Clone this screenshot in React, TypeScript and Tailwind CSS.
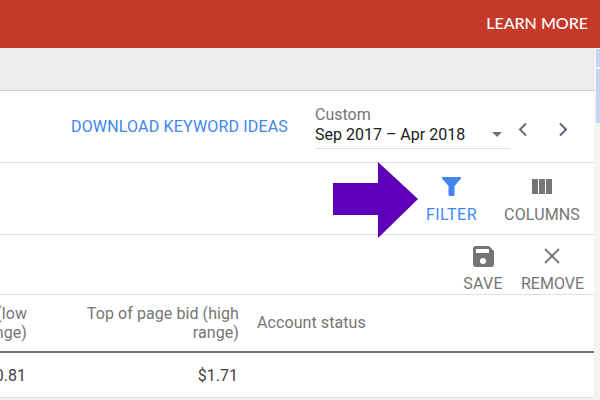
const roboto = { fontFamily: "Roboto, sans-serif" };

function ToolButton({
  icon,
  label,
  labelClass,
  className,
}: {
  icon: React.ReactNode;
  label: string;
  labelClass: string;
  className?: string;
}) {
  return (
    <div className={`flex flex-col items-center ${className ?? ""}`}>
      <div className="flex h-[24px] w-[24px] items-center justify-center">{icon}</div>
      <span className={`mt-[7px] text-[16px] leading-[18px] ${labelClass}`}>{label}</span>
    </div>
  );
}

export default function App() {
  return (
    <div className="flex h-[400px] w-[600px] flex-col overflow-hidden bg-[#f1f1f1]" style={roboto}>
      <header className="flex h-[48px] shrink-0 items-center justify-end bg-[#c53929] pb-[2px] pr-[12px]">
        <span className="text-[16px] font-medium text-white" style={{ fontFamily: "Lato, sans-serif" }}>
          LEARN MORE
        </span>
      </header>

      <div className="flex min-h-0 flex-1">
        <main className="flex w-[594px] shrink-0 flex-col">
          <div className="h-[43px] shrink-0 border-b border-[#d0d0d0] bg-[#ececec]" />

          <div className="flex h-[72px] shrink-0 items-center justify-end border-b border-[#e0e0e0] bg-white">
            <span className="text-[16px] tracking-[0.17px] text-[#4285f4]">DOWNLOAD KEYWORD IDEAS</span>
            <div className="ml-[27px] w-[195px]">
              <div className="text-[16px] leading-[20px] text-[#757575]">Custom</div>
              <div className="relative border-b border-[#e0e0e0] pb-[3px] text-[16px] leading-[20px] text-[#212121]">
                Sep 2017 – Apr 2018
                <div className="absolute right-[8px] top-[7px] h-0 w-0 border-x-[5px] border-t-[5px] border-x-transparent border-t-[#757575]" />
              </div>
            </div>
            <div className="ml-[8px] mr-[26px] flex items-center pt-[5px]">
              <svg width="10" height="15" viewBox="0 0 10 15" fill="none" stroke="#5f6e6e" strokeWidth="2">
                <path d="M8 1.500 2 7.500l6 6" />
              </svg>
              <svg className="ml-[30px]" width="10" height="15" viewBox="0 0 10 15" fill="none" stroke="#5f6080" strokeWidth="2">
                <path d="m2 1.500 6 6-6 6" />
              </svg>
            </div>
          </div>

          <div className="relative flex h-[72px] shrink-0 items-center justify-end border-b border-[#e0e0e0] bg-white pr-[14px] pt-[2px]">
            <ToolButton
              label="FILTER"
              labelClass="tracking-[0.5px] text-[#4285f4]"
              className="mr-[27px]"
              icon={
                <svg className="mt-[-2px]" width="19" height="19" viewBox="0 0 19 19" fill="#4285f4">
                  <path d="M0 0h19v1.500L12.500 9v8.500A1.500 1.500 0 0 1 11 19H8a1.500 1.500 0 0 1-1.500-1.500V9L0 1.500z" />
                </svg>
              }
            />
            <ToolButton
              label="COLUMNS"
              labelClass="tracking-[0.15px] text-[#757575]"
              icon={
                <svg className="mt-[-2px]" width="20" height="15" viewBox="0 0 20 15" fill="#757575">
                  <path d="M0 0h6v15H0zM7 0h6v15H7zM14 0h6v15h-6z" />
                </svg>
              }
            />
            <svg className="absolute left-[333px] top-[-1px]" width="85" height="76" viewBox="0 0 85 76" fill="#5e00ba">
              <path d="M0 21h45V0l40 37-40 39V53H0z" />
            </svg>
          </div>

          <div className="flex h-[60px] shrink-0 items-center justify-end border-b border-[#e0e0e0] bg-white pr-[10px] pt-[8px]">
            <ToolButton
              label="SAVE"
              labelClass="tracking-[0.3px] text-[#757575]"
              className="mr-[18px]"
              icon={
                <svg width="21" height="21" viewBox="0 0 21 21">
                  <path fill="#757575" d="M3 0h13l5 5v13a3 3 0 0 1-3 3H3a3 3 0 0 1-3-3V3a3 3 0 0 1 3-3z" />
                  <path fill="#fff" d="M3 3h13v4H3z" />
                  <circle fill="#fff" cx="10" cy="15" r="3" />
                </svg>
              }
            />
            <ToolButton
              label="REMOVE"
              labelClass="text-[#757575]"
              icon={
                <svg width="16" height="16" viewBox="0 0 16 16" fill="none" stroke="#757575" strokeWidth="1.800">
                  <path d="m1 1 14 14M15 1 1 15" />
                </svg>
              }
            />
          </div>

          <div className="flex h-[58px] shrink-0 items-center border-b-2 border-[#757575] bg-white text-[16px] leading-[19px] tracking-[0.08px] text-[#757575]">
            <div className="ml-[-123px] w-[150px] shrink-0 text-right">Top of page bid (low range)</div>
            <div className="ml-[57px] w-[155px] shrink-0 text-right">Top of page bid (high range)</div>
            <div className="ml-[18px] mt-[-2px]">Account status</div>
          </div>

          <div className="flex h-[45px] shrink-0 items-center border-b border-[#e0e0e0] bg-white pt-[2px] text-[16px] text-[#424242]">
            <div className="ml-[-24px] w-[50px] shrink-0 text-right">$0.81</div>
            <div className="ml-[162px] w-[50px] shrink-0 text-right">$1.71</div>
          </div>
        </main>

        <aside className="flex w-[6px] flex-col gap-[2px] bg-[#f5f4f0] pl-[2px] pt-[1px]">
          <div className="h-[18px] bg-[#c6d4f5]" />
          <div className="h-[54px] bg-[#c6d4f5]" />
        </aside>
      </div>
    </div>
  );
}
